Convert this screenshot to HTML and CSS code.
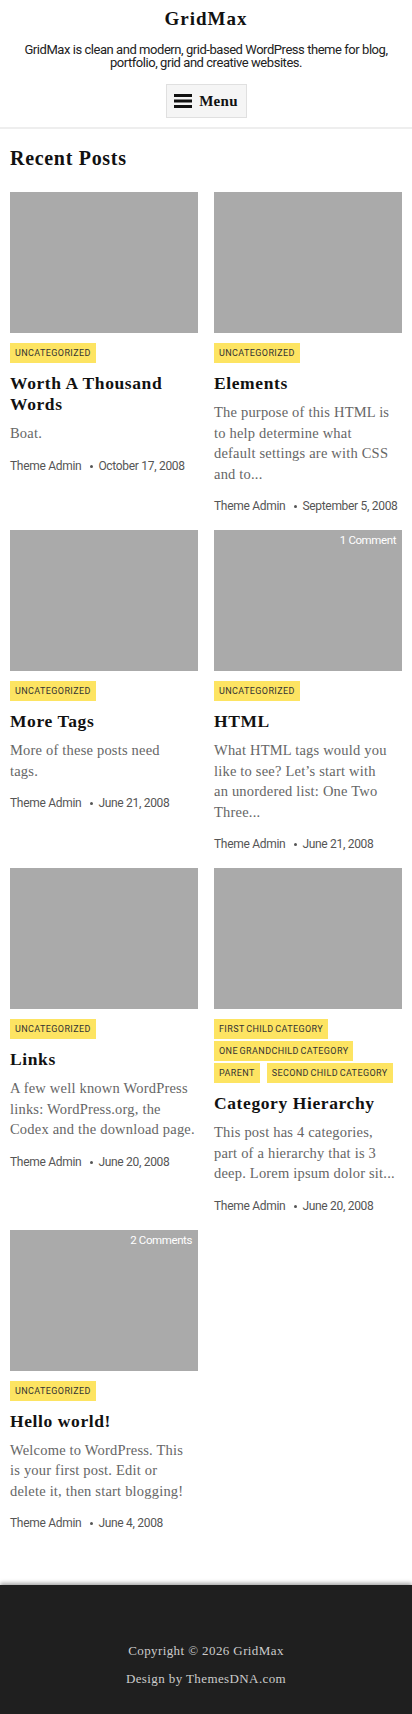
FILE: index.html
```html
<!DOCTYPE html>
<html lang="en">
<head>
<meta charset="utf-8">
<meta name="viewport" content="width=device-width, initial-scale=1">
<title>GridMax</title>
<link rel="stylesheet" href="styles.css">
</head>
<body>
<header class="site-header">
  <h1 class="site-title">GridMax</h1>
  <p class="site-desc">GridMax is clean and modern, grid-based WordPress theme for blog, portfolio, grid and creative websites.</p>
  <button class="menu-btn" type="button">
    <svg class="menu-icon" width="18" height="16" viewBox="0 0 18 16" aria-hidden="true"><rect x="0" y="1" width="18" height="3" fill="#111"/><rect x="0" y="6.5" width="18" height="3" fill="#111"/><rect x="0" y="12" width="18" height="3" fill="#111"/></svg>
    <span>Menu</span>
  </button>
</header>

<main class="main">
  <h2 class="section-title">Recent Posts</h2>
  <div class="grid">
    <article class="post">
      <div class="thumb"></div>
      <div class="cats"><span class="cat">Uncategorized</span></div>
      <h3 class="post-title">Worth A Thousand Words</h3>
      <p class="excerpt">Boat.</p>
      <div class="meta"><span>Theme Admin</span><span class="dot"></span><span>October 17, 2008</span></div>
    </article>
    <article class="post">
      <div class="thumb"></div>
      <div class="cats"><span class="cat">Uncategorized</span></div>
      <h3 class="post-title">Elements</h3>
      <p class="excerpt">The purpose of this HTML is<br>to help determine what<br>default settings are with CSS<br>and to...</p>
      <div class="meta"><span>Theme Admin</span><span class="dot"></span><span>September 5, 2008</span></div>
    </article>
    <article class="post">
      <div class="thumb"></div>
      <div class="cats"><span class="cat">Uncategorized</span></div>
      <h3 class="post-title">More Tags</h3>
      <p class="excerpt">More of these posts need<br>tags.</p>
      <div class="meta"><span>Theme Admin</span><span class="dot"></span><span>June 21, 2008</span></div>
    </article>
    <article class="post">
      <div class="thumb"><span class="comments">1 Comment</span></div>
      <div class="cats"><span class="cat">Uncategorized</span></div>
      <h3 class="post-title">HTML</h3>
      <p class="excerpt">What HTML tags would you<br>like to see? Let’s start with<br>an unordered list: One Two<br>Three...</p>
      <div class="meta"><span>Theme Admin</span><span class="dot"></span><span>June 21, 2008</span></div>
    </article>
    <article class="post">
      <div class="thumb"></div>
      <div class="cats"><span class="cat">Uncategorized</span></div>
      <h3 class="post-title">Links</h3>
      <p class="excerpt">A few well known WordPress<br>links: WordPress.org, the<br>Codex and the download page.</p>
      <div class="meta"><span>Theme Admin</span><span class="dot"></span><span>June 20, 2008</span></div>
    </article>
    <article class="post">
      <div class="thumb"></div>
      <div class="cats"><span class="cat">First Child Category</span><span class="cat">One Grandchild Category</span><span class="cat">Parent</span><span class="cat">Second Child Category</span></div>
      <h3 class="post-title">Category Hierarchy</h3>
      <p class="excerpt">This post has 4 categories,<br>part of a hierarchy that is 3<br>deep. Lorem ipsum dolor sit...</p>
      <div class="meta"><span>Theme Admin</span><span class="dot"></span><span>June 20, 2008</span></div>
    </article>
    <article class="post">
      <div class="thumb"><span class="comments">2 Comments</span></div>
      <div class="cats"><span class="cat">Uncategorized</span></div>
      <h3 class="post-title">Hello world!</h3>
      <p class="excerpt">Welcome to WordPress. This<br>is your first post. Edit or<br>delete it, then start blogging!</p>
      <div class="meta"><span>Theme Admin</span><span class="dot"></span><span>June 4, 2008</span></div>
    </article>
  </div>
</main>

<footer class="site-footer">
  <p class="foot-line">Copyright © 2026 GridMax</p>
  <p class="foot-line">Design by ThemesDNA.com</p>
</footer>
</body>
</html>
```
FILE: styles.css
```css
* { box-sizing: border-box; }

body {
  margin: 0;
  background: #fff;
  color: #333;
  font-family: "Liberation Serif", "DejaVu Serif", serif;
}

.site-header {
  padding: 7px 10px 9px;
  text-align: center;
  border-bottom: 2px solid #eeeeee;
}

.site-title {
  margin: 0;
  font-family: "Liberation Serif", serif;
  font-weight: 700;
  font-size: 19px;
  line-height: 24px;
  letter-spacing: 1px;
  color: #111;
}

.site-desc {
  margin: 13px 0 0;
  font-family: "Roboto", sans-serif;
  font-size: 13px;
  line-height: 12.5px;
  letter-spacing: -0.45px;
  color: #222;
}

.menu-btn {
  margin-top: 15px;
  height: 34px;
  width: 81px;
  display: inline-flex;
  align-items: center;
  justify-content: center;
  gap: 7px;
  padding: 0;
  background: #f5f5f5;
  border: 1px solid #e0e0e0;
  font-family: "Liberation Serif", serif;
  font-weight: 700;
  font-size: 15px;
  letter-spacing: 0.3px;
  color: #111;
}

.menu-icon { display: block; }

.main {
  padding: 0 10px 53px;
}

.section-title {
  margin: 16px 0 21px;
  font-family: "Liberation Serif", serif;
  font-weight: 700;
  font-size: 20px;
  line-height: 26px;
  letter-spacing: 0.7px;
  color: #111;
}

.grid {
  display: grid;
  grid-template-columns: 1fr 1fr;
  column-gap: 16px;
  row-gap: 15px;
  align-items: start;
}

.thumb {
  position: relative;
  height: 141px;
  background: #aaaaaa;
}

.comments {
  position: absolute;
  top: 2px;
  right: 6px;
  font-family: "Roboto", sans-serif;
  font-size: 11.5px;
  line-height: 16px;
  letter-spacing: -0.4px;
  color: #fff;
}

.cats {
  margin-top: 10px;
  display: flex;
  flex-wrap: wrap;
}

.cat {
  display: inline-block;
  height: 20px;
  line-height: 20px;
  padding: 0 5px;
  margin: 0 7px 2px 0;
  background: #fde462;
  font-family: "Roboto", sans-serif;
  font-weight: 400;
  font-size: 9px;
  letter-spacing: 0.4px;
  word-spacing: -1px;
  text-transform: uppercase;
  color: #333;
  white-space: nowrap;
}

.post-title {
  margin: 8px 0 0;
  font-family: "Liberation Serif", serif;
  font-weight: 700;
  font-size: 17.5px;
  line-height: 21px;
  letter-spacing: 0.6px;
  color: #111;
}

.excerpt {
  margin: 8px 0 0;
  font-family: "Liberation Serif", serif;
  font-size: 14.5px;
  line-height: 20.5px;
  letter-spacing: 0.2px;
  color: #666;
}

.meta {
  margin-top: 13px;
  display: flex;
  align-items: center;
  white-space: nowrap;
  font-family: "Roboto", sans-serif;
  font-size: 12px;
  line-height: 18px;
  letter-spacing: -0.3px;
  color: #555;
}

.dot {
  width: 3px;
  height: 3px;
  border-radius: 50%;
  background: #555;
  margin: 1px 5px 0 9px;
}

.site-footer {
  background: #1f1f1f;
  box-shadow: 0 -2px 4px rgba(0, 0, 0, 0.35);
  padding: 57px 10px 26px;
  text-align: center;
}

.foot-line {
  margin: 0 0 10px;
  font-family: "Liberation Serif", serif;
  font-size: 13px;
  line-height: 18px;
  letter-spacing: 0.4px;
  color: #cccccc;
}
```
